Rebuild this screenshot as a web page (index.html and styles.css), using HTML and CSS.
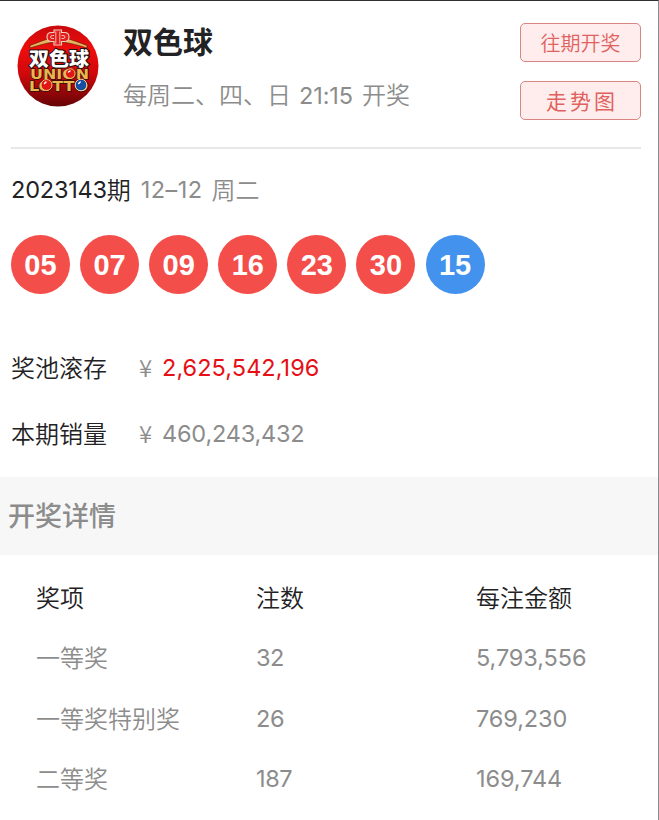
FILE: index.html
```html
<!DOCTYPE html>
<html lang="zh-CN">
<head>
<meta charset="utf-8">
<title>双色球</title>
<link rel="stylesheet" href="styles.css">
</head>
<body>
<main class="page">
  <header class="header">
    <svg class="logo" viewBox="0 0 82 82" role="img" aria-label="双色球">
      <defs>
        <linearGradient id="disc" x1="0" y1="0" x2="0" y2="1">
          <stop offset="0" stop-color="#c90a0c"/>
          <stop offset=".3" stop-color="#ee0d0c"/>
          <stop offset=".6" stop-color="#cf080a"/>
          <stop offset="1" stop-color="#650407"/>
        </linearGradient>
      </defs>
      <circle cx="41" cy="41" r="40.5" fill="url(#disc)"/>
      <path d="M13 23V20.500Q26 15.500 32 13.500H50Q57 15.500 70 20.500V23Q56 18.500 48 17.500H34Q27 18.500 13 23Z" fill="#e7b45c" stroke="#5a1208" stroke-width=".6"/>
      <path d="M37 5h7.500v2.500h3q4.500 0 4.500 4.500t-4.500 4.500h-3V20H37v-3.500h-2.500q-4.500 0-4.500-4.500t4.500-4.500H37Z" fill="#e51c1c" stroke="#f3cfc0" stroke-width="1.100"/>
      <path d="M38.800 6.500v12M42.800 6.500v12M37 10.500h-1.500q-2 0-2 1.500t2 1.500H37M44.500 10.500h1.500q2 0 2 1.500t-2 1.500h-1.500" fill="none" stroke="#f3cfc0" stroke-width=".9"/>
      <text class="logo-cn" x="12" y="40.500" textLength="60" lengthAdjust="spacingAndGlyphs">双色球</text>
      <text class="logo-en" x="13" y="54" textLength="59" lengthAdjust="spacingAndGlyphs">UNION</text>
      <text class="logo-en" x="12" y="65.500" textLength="59" lengthAdjust="spacingAndGlyphs">LOTTO</text>
      <circle cx="53.300" cy="48.500" r="4.800" fill="#e31616" stroke="#f0c66f"/>
      <circle cx="29.500" cy="60" r="5.500" fill="#e31616" stroke="#f0c66f"/>
      <circle cx="64" cy="60" r="5.800" fill="#164fa5" stroke="#f0d59b"/>
      <path d="M51.500 47l1.500-1M27.500 58.500l1.500-1.500M61.700 58.500l1.500-1.500" stroke="#fff" stroke-width="1.500" stroke-linecap="round"/>
    </svg>
    <div class="intro">
      <h1 class="title">双色球</h1>
      <p class="schedule">每周二、四、日<span class="num time">21:15</span>开奖</p>
    </div>
    <nav class="actions">
      <a class="button">往期开奖</a>
      <a class="button spaced">走势图</a>
    </nav>
  </header>

  <section class="draw">
    <p class="issue"><span class="num issue-no">2023143</span>期<span class="date"><span class="num day">12–12</span> 周二</span></p>
    <div class="balls">
      <span class="ball">05</span><span class="ball">07</span><span class="ball">09</span><span class="ball">16</span><span class="ball">23</span><span class="ball">30</span><span class="ball blue">15</span>
    </div>
    <dl class="totals">
      <div class="total"><dt>奖池滚存</dt><dd><span class="yen">¥</span><span class="num pool">2,625,542,196</span></dd></div>
      <div class="total"><dt>本期销量</dt><dd><span class="yen">¥</span><span class="num">460,243,432</span></dd></div>
    </dl>
  </section>

  <h2 class="section-title">开奖详情</h2>
  <div class="prizes">
    <div class="row head"><span>奖项</span><span>注数</span><span>每注金额</span></div>
    <div class="row"><span>一等奖</span><span class="num">32</span><span class="num amount">5,793,556</span></div>
    <div class="row"><span>一等奖特别奖</span><span class="num">26</span><span class="num amount">769,230</span></div>
    <div class="row"><span>二等奖</span><span class="num">187</span><span class="num amount">169,744</span></div>
  </div>
</main>
</body>
</html>
```
FILE: styles.css
```css
* { box-sizing: border-box; margin: 0; padding: 0; }
body {
  background: #fff;
  color: #222224;
  font: 24px/36px "Noto Sans CJK SC", sans-serif;
  font-weight: 350;
}
.page {
  width: 659px;
  height: 820px;
  overflow: hidden;
  border-top: 1px solid #303033;
  border-right: 1px solid #8b8b8d;
}
.num { font-family: Inter, "Noto Sans CJK SC", sans-serif; font-size: 23.500px; font-weight: 400; letter-spacing: -.4px; }
.header {
  display: flex;
  height: 148px;
  margin: 0 17px 0 11px;
  padding: 22px 0 0 6px;
  border-bottom: 2px solid #e8e8e8;
}
.logo { flex: none; width: 82px; height: 82px; margin-top: 2px; }
.logo-cn {
  font: 900 19px "Noto Sans CJK SC", sans-serif;
  fill: #fff;
  stroke: #211313;
  stroke-width: 2px;
  paint-order: stroke;
}
.logo-en {
  font: 700 14.500px "DejaVu Sans", sans-serif;
  fill: #e9b64f;
  stroke: #341008;
  stroke-width: 1.500px;
  paint-order: stroke;
}
.intro { flex: 1; padding-left: 24px; }
.title { margin-top: -3px; font-size: 30px; line-height: 40px; font-weight: 700; }
.schedule { display: flex; margin-top: 16px; color: #8c8c8c; }
.time { margin: 0 9px 0 8px; padding-top: 2px; letter-spacing: -.1px; }
.actions { display: grid; gap: 19px; align-content: start; width: 121px; }
.button {
  height: 39px;
  border: 1px solid #d98582;
  border-radius: 5px;
  background: #ffeded;
  color: #df625e;
  font-size: 20px;
  line-height: 37px;
  text-align: center;
}
.spaced { font-size: 21px; font-weight: 400; letter-spacing: 3px; padding-left: 3px; }
.draw { height: 328px; padding: 22px 11px 0; }
.issue { display: flex; height: 36px; }
.issue .num { padding-top: 1px; }
.issue-no { letter-spacing: -.2px; }
.day { letter-spacing: .4px; }
.date { display: flex; gap: 9px; margin-left: 10px; color: #8c8c8c; }
.balls { display: flex; gap: 10.100px; margin-top: 28px; }
.ball {
  width: 59px;
  height: 59px;
  border-radius: 50%;
  background: #f44e4b;
  color: #fff;
  font: 700 29px/61px "Liberation Sans", sans-serif;
  text-align: center;
}
.blue { background: #4292ee; }
.totals { display: grid; gap: 30px; margin-top: 55px; }
.total { display: flex; height: 36px; }
.total dt { width: 128px; }
.total dd { display: flex; color: #8c8c8c; }
.total .num { padding-top: 1px; letter-spacing: -.2px; }
.yen { width: 23px; }
.total .pool { color: #e60f15; letter-spacing: .05px; }
.section-title {
  height: 78px;
  padding-left: 8px;
  background: #f7f7f7;
  color: #8c8c8c;
  font-size: 27px;
  line-height: 76px;
  font-weight: 500;
}
.prizes { padding: 12px 0 0 36px; }
.row {
  display: grid;
  grid-template-columns: 220px 220px 1fr;
  height: 60.300px;
  line-height: 60px;
  color: #8c8c8c;
}
.row .num { padding-top: 1px; }
.row .amount { letter-spacing: -.1px; }
.head { color: #222224; }
```
